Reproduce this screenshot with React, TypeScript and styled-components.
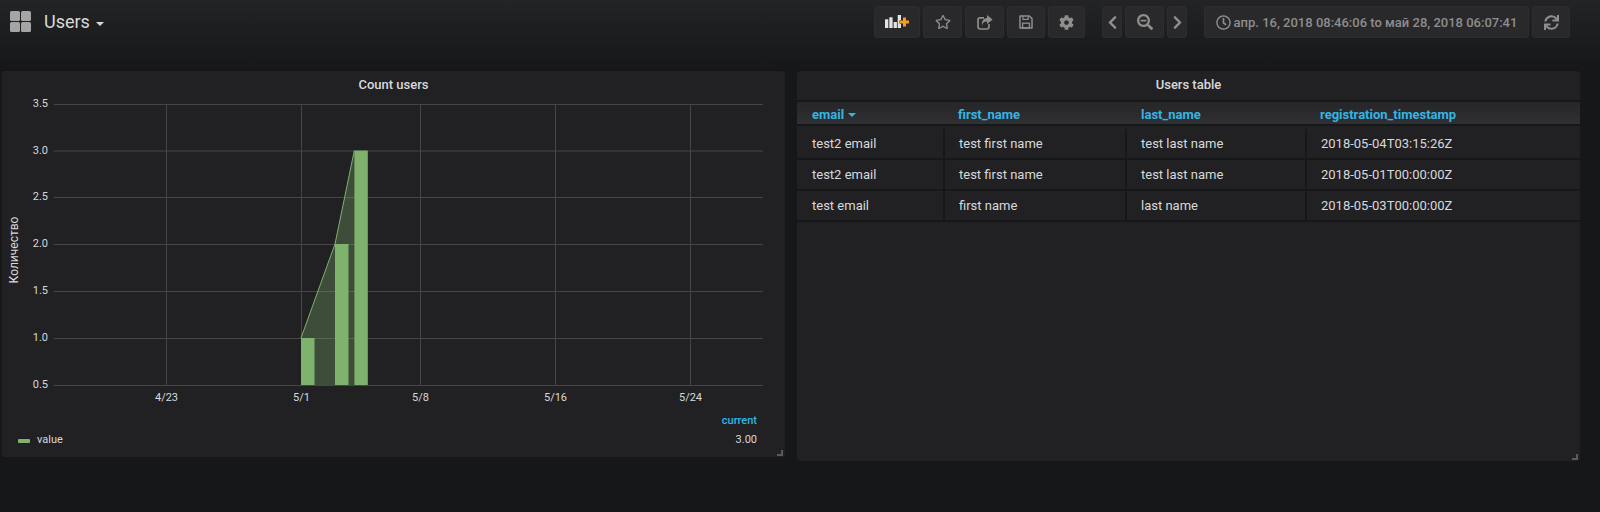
import styled, { createGlobalStyle } from 'styled-components';
import {
  FaRegStar,
  FaCog,
  FaChevronLeft,
  FaChevronRight,
  FaSearchMinus,
  FaRegClock,
  FaSync,
} from 'react-icons/fa';

const GlobalStyle = createGlobalStyle`
  html, body {
    margin: 0;
    padding: 0;
    height: 512px;
    overflow: hidden;
    background: #161719;
    color: #d8d9da;
    font-family: Roboto, "Liberation Sans", sans-serif;
  }
  * { box-sizing: border-box; }
`;

const Page = styled.div`
  width: 1600px;
  height: 512px;
  background: linear-gradient(#232426 0, #161719 66px);
`;

const Navbar = styled.div`
  height: 70px;
  padding: 5px 30px 0 10px;
  display: flex;
  align-items: flex-start;
`;

const TitleLink = styled.div`
  display: flex;
  align-items: center;
  height: 33px;
  flex: 1;
  font-size: 18px;
  color: #d8d9da;
`;

const LogoGrid = styled.svg`
  width: 22px;
  height: 22px;
  margin-right: 12px;
`;

const Caret = styled.span`
  width: 0;
  height: 0;
  margin: 4px 0 0 6px;
  border-left: 4px solid transparent;
  border-right: 4px solid transparent;
  border-top: 4px solid #d8d9da;
`;

const Toolbar = styled.div`
  display: flex;
  gap: 3px;
  height: 33px;
`;

const ToolGroup = styled.div<{ $gap?: number }>`
  display: flex;
  gap: 3px;
  margin-left: ${(p) => p.$gap ?? 0}px;
`;

const ToolButton = styled.div<{ $w: number }>`
  width: ${(p) => p.$w}px;
  height: 32px;
  margin-top: 1px;
  display: flex;
  align-items: center;
  justify-content: center;
  gap: 3px;
  background: #29292b;
  border: 1px solid #2d2d2f;
  border-radius: 3px;
  color: #8e8e8e;
  font-size: 16px;
  font-weight: 500;
`;

const TimeText = styled.span`
  font-size: 13px;
  white-space: nowrap;
`;

const Panels = styled.div`
  display: flex;
  align-items: flex-start;
  gap: 12px;
  padding-left: 2px;
`;

const Panel = styled.div<{ $h: number }>`
  position: relative;
  width: 783px;
  height: ${(p) => p.$h}px;
  background: #212124;
  border-top: 1px solid #141416;
  border-radius: 3px;
`;

const PanelTitle = styled.div`
  height: 29px;
  padding-top: 6px;
  text-align: center;
  font-size: 13px;
  font-weight: 500;
  line-height: 16px;
  color: #d8d9da;
`;

const ChartSvg = styled.svg`
  display: block;
  width: 783px;
  height: 310px;
  overflow: visible;
  font-family: Roboto, sans-serif;
  font-size: 11px;
`;

const Legend = styled.div`
  display: flex;
  justify-content: space-between;
  align-items: flex-end;
  padding: 4px 28px 0 16px;
  font-size: 11px;
  line-height: 13px;
`;

const LegendSeries = styled.div`
  display: flex;
  align-items: center;
  gap: 7px;
`;

const LegendLine = styled.span`
  width: 12px;
  height: 4px;
  margin-top: 2px;
  background: #7eb26d;
  border-radius: 1px;
`;

const LegendValues = styled.div`
  display: flex;
  flex-direction: column;
  align-items: flex-end;
  gap: 6px;
`;

const LegendHeader = styled.span`
  color: #33b5e5;
  font-weight: 500;
`;

const ResizeHandle = styled.span`
  position: absolute;
  right: 2px;
  bottom: 1px;
  width: 6px;
  height: 6px;
  border-right: 2px solid #5a5a5c;
  border-bottom: 2px solid #5a5a5c;
`;

const TableRow = styled.div<{ $first?: boolean }>`
  display: grid;
  grid-template-columns: 148px 182px 180px 1fr;
  border-bottom: 2px solid #161719;
  padding-top: ${(p) => (p.$first ? 3 : 0)}px;
`;

const HeaderRow = styled.div`
  display: grid;
  grid-template-columns: 148px 182px 180px 1fr;
  height: 26px;
  padding-top: 4px;
  border-top: 2px solid #161719;
  border-bottom: 2px solid #161719;
  background: linear-gradient(#262628, #303032);
`;

const HeaderCell = styled.div<{ $pad: number }>`
  padding-left: ${(p) => p.$pad}px;
  color: #33b5e5;
  font-size: 13px;
  font-weight: 700;
  line-height: 18px;
  display: flex;
  align-items: center;
  gap: 4px;
`;

const SortCaret = styled.span`
  width: 0;
  height: 0;
  border-left: 4px solid transparent;
  border-right: 4px solid transparent;
  border-top: 4px solid #33b5e5;
`;

const Cell = styled.div<{ $pad: number; $last?: boolean }>`
  height: 29px;
  padding-left: ${(p) => p.$pad}px;
  border-right: ${(p) => (p.$last ? 'none' : '2px solid #161719')};
  font-size: 13px;
  line-height: 29px;
  color: #d8d9da;
`;

const yTicks = [
  { label: '3.5', y: 4 },
  { label: '3.0', y: 50.5 },
  { label: '2.5', y: 97 },
  { label: '2.0', y: 144 },
  { label: '1.5', y: 191 },
  { label: '1.0', y: 238 },
  { label: '0.5', y: 285 },
];

const xTicks = [
  { label: '4/23', x: 164 },
  { label: '5/1', x: 299 },
  { label: '5/8', x: 418 },
  { label: '5/16', x: 553 },
  { label: '5/24', x: 688 },
];

const bars = [
  { x: 299, y: 238 },
  { x: 333, y: 144 },
  { x: 352.3, y: 50.5 },
];

const headers = [
  { label: 'email', pad: 15, sorted: true },
  { label: 'first_name', pad: 13 },
  { label: 'last_name', pad: 14 },
  { label: 'registration_timestamp', pad: 13 },
];

const pads = [15, 14, 14, 14];

const rows = [
  ['test2 email', 'test first name', 'test last name', '2018-05-04T03:15:26Z'],
  ['test2 email', 'test first name', 'test last name', '2018-05-01T00:00:00Z'],
  ['test email', 'first name', 'last name', '2018-05-03T00:00:00Z'],
];

function AddPanelIcon() {
  return (
    <svg width="26" height="16" viewBox="0 0 26 16">
      <g fill="#e3e3e3">
        <rect x="1" y="5.3" width="3.3" height="8.7" />
        <rect x="5.3" y="3.3" width="3.3" height="10.7" />
        <rect x="9.6" y="8" width="3.3" height="6" />
        <rect x="13.7" y="1" width="3.3" height="13" />
      </g>
      <path
        d="M19 3.5h3v3h3v3h-3v3h-3v-3h-3v-3h3z"
        fill="#f79d24"
        stroke="#29292b"
        strokeWidth="1"
        paintOrder="stroke"
      />
    </svg>
  );
}

function ShareIcon() {
  return (
    <svg width="16" height="15" viewBox="0 0 16 15">
      <path
        d="M7 2.8H3.2a2.2 2.2 0 0 0-2.2 2.2v6.8a2.2 2.2 0 0 0 2.2 2.2h6.6a2.2 2.2 0 0 0 2.2-2.2V9"
        fill="none"
        stroke="currentColor"
        strokeWidth="1.7"
      />
      <path d="M10 0l5.6 4.6L10 9.2V6.6C7.2 6.6 5.6 7.6 5 11 4.4 6.8 6.2 3 10 3z" fill="currentColor" />
    </svg>
  );
}

function SaveIcon() {
  return (
    <svg width="14" height="14" viewBox="0 0 14 14" fill="none" stroke="currentColor">
      <path d="M1 1h9.4L13 3.6V13H1z" strokeWidth="1.5" strokeLinejoin="round" />
      <rect x="3.6" y="8.2" width="6.8" height="4.8" strokeWidth="1.3" />
      <path d="M4 1v3.4h5.2V1" strokeWidth="1.2" />
    </svg>
  );
}

function CountChart() {
  return (
    <ChartSvg viewBox="0 0 783 310">
      {yTicks.map((t) => (
        <g key={t.label}>
          <line x1="52" x2="761" y1={t.y + 0.5} y2={t.y + 0.5} stroke="#464648" />
          <text x="46" y={t.y + 3} textAnchor="end" fill="#d8d9da">
            {t.label}
          </text>
        </g>
      ))}
      {xTicks.map((t) => (
        <g key={t.label}>
          <line x1={t.x + 0.5} x2={t.x + 0.5} y1="4" y2="285" stroke="#464648" />
          <text x={t.x + 0.5} y="301" textAnchor="middle" fill="#d8d9da">
            {t.label}
          </text>
        </g>
      ))}
      <polygon points="299,238 333,144 352.3,50.5 352.3,285 299,285" fill="#7eb26d" fillOpacity="0.3" />
      <polyline points="299,238 333,144 352.3,50.5" fill="none" stroke="#7eb26d" />
      {bars.map((b) => (
        <rect key={b.x} x={b.x} y={b.y} width={13.5} height={285 - b.y} fill="#7eb26d" />
      ))}
      <text transform="translate(16 150) rotate(-90)" textAnchor="middle" fontSize="12" fill="#d8d9da">
        Количество
      </text>
    </ChartSvg>
  );
}

export default function App() {
  return (
    <Page>
      <GlobalStyle />
      <Navbar>
        <TitleLink>
          <LogoGrid viewBox="0 0 22 22">
            <g fill="#a5a5a5">
              <rect x="0" y="0" width="10" height="10" rx="1.5" />
              <rect x="11" y="0" width="10" height="10" rx="1.5" />
              <rect x="0" y="11" width="10" height="10" rx="1.5" />
              <rect x="11" y="11" width="10" height="10" rx="1.5" />
            </g>
          </LogoGrid>
          Users
          <Caret />
        </TitleLink>
        <Toolbar>
          <ToolGroup>
            <ToolButton $w={46}>
              <AddPanelIcon />
            </ToolButton>
            <ToolButton $w={39}>
              <FaRegStar size={16} />
            </ToolButton>
            <ToolButton $w={39}>
              <ShareIcon />
            </ToolButton>
            <ToolButton $w={38}>
              <SaveIcon />
            </ToolButton>
            <ToolButton $w={37}>
              <FaCog size={15} />
            </ToolButton>
          </ToolGroup>
          <ToolGroup $gap={14}>
            <ToolButton $w={20}>
              <FaChevronLeft size={15} />
            </ToolButton>
            <ToolButton $w={39}>
              <FaSearchMinus size={16} />
            </ToolButton>
            <ToolButton $w={20}>
              <FaChevronRight size={15} />
            </ToolButton>
          </ToolGroup>
          <ToolGroup $gap={14}>
            <ToolButton $w={325}>
              <FaRegClock size={15} />
              <TimeText>апр. 16, 2018 08:46:06 to май 28, 2018 06:07:41</TimeText>
            </ToolButton>
            <ToolButton $w={38}>
              <FaSync size={15} />
            </ToolButton>
          </ToolGroup>
        </Toolbar>
      </Navbar>
      <Panels>
        <Panel $h={387}>
          <PanelTitle>Count users</PanelTitle>
          <CountChart />
          <Legend>
            <LegendSeries>
              <LegendLine />
              value
            </LegendSeries>
            <LegendValues>
              <LegendHeader>current</LegendHeader>
              3.00
            </LegendValues>
          </Legend>
          <ResizeHandle />
        </Panel>
        <Panel $h={391}>
          <PanelTitle>Users table</PanelTitle>
          <HeaderRow>
            {headers.map((h) => (
              <HeaderCell key={h.label} $pad={h.pad}>
                {h.label}
                {h.sorted && <SortCaret />}
              </HeaderCell>
            ))}
          </HeaderRow>
          {rows.map((row, i) => (
            <TableRow key={i} $first={i === 0}>
              {row.map((value, j) => (
                <Cell key={j} $pad={pads[j]} $last={j === 3}>
                  {value}
                </Cell>
              ))}
            </TableRow>
          ))}
          <ResizeHandle />
        </Panel>
      </Panels>
    </Page>
  );
}
